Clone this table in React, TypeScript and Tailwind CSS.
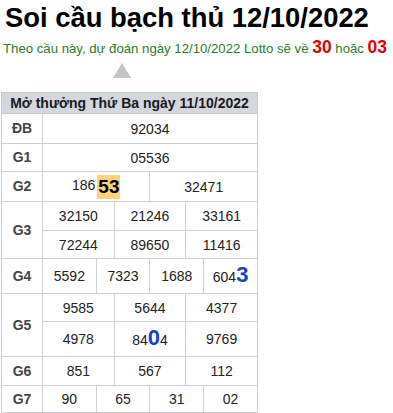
const rows: { label: string; h: string[]; lines: React.ReactNode[][] }[] = [
  { label: "ĐB", h: ["h-[30px]"], lines: [["92034"]] },
  { label: "G1", h: ["h-[28px]"], lines: [["05536"]] },
  {
    label: "G2",
    h: ["h-[30px]"],
    lines: [
      [
        <span key="a">
          186
          <span className="ml-[2px] inline-block bg-[#fcd27a] px-[1px] align-middle text-[19px] font-bold leading-[24px] text-black">
            53
          </span>
        </span>,
        "32471",
      ],
    ],
  },
  {
    label: "G3",
    h: ["h-[29px]", "h-[28px]"],
    lines: [
      ["32150", "21246", "33161"],
      ["72244", "89650", "11416"],
    ],
  },
  {
    label: "G4",
    h: ["h-[35px]"],
    lines: [
      [
        "5592",
        "7323",
        "1688",
        <span key="b">
          604<span className="text-[22px] font-bold text-[#1a3fd0]">3</span>
        </span>,
      ],
    ],
  },
  {
    label: "G5",
    h: ["h-[28px]", "h-[35px]"],
    lines: [
      ["9585", "5644", "4377"],
      [
        "4978",
        <span key="c">
          84<span className="text-[22px] font-bold text-[#1a3fd0]">0</span>4
        </span>,
        "9769",
      ],
    ],
  },
  { label: "G6", h: ["h-[29px]"], lines: [["851", "567", "112"]] },
  { label: "G7", h: ["h-[27px]"], lines: [["90", "65", "31", "02"]] },
]

const spanFor = (n: number) => 12 / n

export default function App() {
  return (
    <div className="min-h-[413px] bg-white pl-[1px] font-['Liberation_Sans',Arial,sans-serif] text-[#222]">
      <h1 className="pl-[4px] pt-[2px] text-[27.4px] font-bold leading-[32px] text-black">
        Soi cầu bạch thủ 12/10/2022
      </h1>
      <p className="pl-[2px] pt-[3px] text-[13.2px] leading-[20px] text-[#2b7a2b]">
        Theo cầu này, dự đoán ngày 12/10/2022 Lotto sẽ về{" "}
        <span className="text-[17.5px] font-bold text-[#e00000]">30</span> hoặc{" "}
        <span className="text-[17.5px] font-bold text-[#e00000]">03</span>
      </p>
      <div className="ml-[112px] mt-[4px] h-0 w-0 border-x-[9px] border-b-[15px] border-x-transparent border-b-[#c4c4c4]" />
      <table className="mt-[14px] w-[257px] table-fixed border-collapse text-center text-[14px]">
        <colgroup>
          <col className="w-[41px]" />
          {Array.from({ length: 12 }).map((_, i) => (
            <col key={i} />
          ))}
        </colgroup>
        <thead>
          <tr>
            <th
              colSpan={13}
              className="h-[21px] border border-[#c8c8c8] bg-[#d5d7de] p-0 text-[14px] font-bold leading-[17px] text-[#1a1a1a]"
            >
              Mở thưởng Thứ Ba ngày 11/10/2022
            </th>
          </tr>
        </thead>
        <tbody>
          {rows.map((r) =>
            r.lines.map((line, li) => (
              <tr key={r.label + li}>
                {li === 0 && (
                  <td
                    rowSpan={r.lines.length}
                    className="border border-[#d0d0d0] p-0 text-[14px] font-bold text-[#444]"
                  >
                    {r.label}
                  </td>
                )}
                {line.map((v, vi) => (
                  <td
                    key={vi}
                    colSpan={spanFor(line.length)}
                    className={`${r.h[li]} border border-[#d0d0d0] p-0 leading-[20px]`}
                  >
                    {v}
                  </td>
                ))}
              </tr>
            ))
          )}
        </tbody>
      </table>
    </div>
  )
}
